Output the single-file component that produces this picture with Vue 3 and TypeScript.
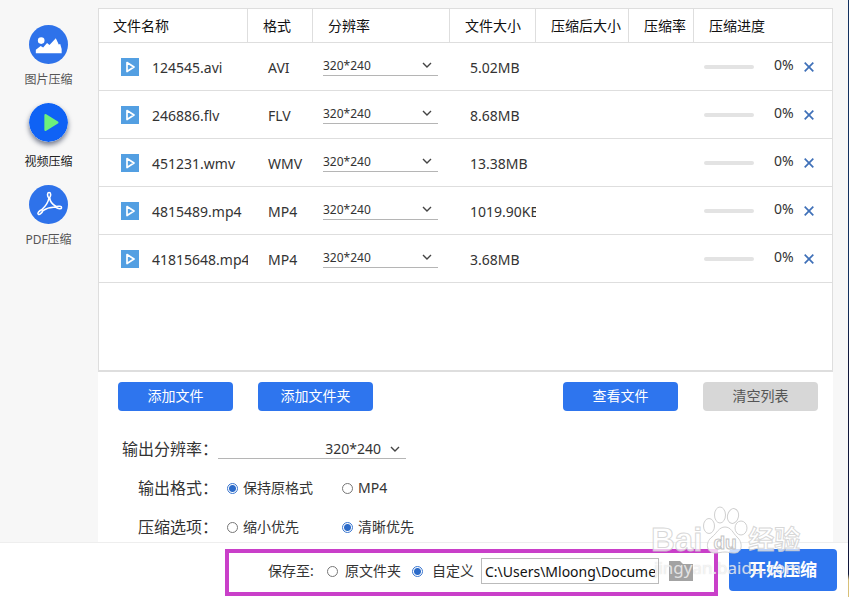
<script setup lang="ts">
import { ref } from 'vue'

interface VideoFile {
  name: string
  format: string
  resolution: string
  size: string
  progress: number
}

const resolutions: string[] = ['320*240', '640*480', '1280*720']

const files = ref<VideoFile[]>([
  { name: '124545.avi', format: 'AVI', resolution: '320*240', size: '5.02MB', progress: 0 },
  { name: '246886.flv', format: 'FLV', resolution: '320*240', size: '8.68MB', progress: 0 },
  { name: '451231.wmv', format: 'WMV', resolution: '320*240', size: '13.38MB', progress: 0 },
  { name: '4815489.mp4', format: 'MP4', resolution: '320*240', size: '1019.90KB', progress: 0 },
  { name: '41815648.mp4', format: 'MP4', resolution: '320*240', size: '3.68MB', progress: 0 },
])

const outputResolution = ref<string>('320*240')
const outputFormat = ref<string>('keep')
const priority = ref<string>('clear')
const saveTo = ref<string>('custom')
const savePath = ref<string>('C:\\Users\\Mloong\\Documents')

function removeFile(index: number): void {
  files.value.splice(index, 1)
}

function clearFiles(): void {
  files.value = []
}
</script>

<template>
  <div class="app">
    <div class="workspace">
      <nav class="sidebar">
        <a class="nav-item" href="#image">
          <svg class="nav-icon" viewBox="0 0 40 40" aria-hidden="true">
            <circle cx="20" cy="20" r="20" fill="#2e72ea" />
            <circle cx="12.5" cy="16" r="3.4" fill="#fff" />
            <path d="M7 29v-3.500l5-4 2.500 1.500 4-4.500 2.500 2 6.500-7 3 6.500 1.500-.5 1.500 5v4.500z" fill="#fff" />
          </svg>
          <span>图片压缩</span>
        </a>
        <a class="nav-item active" href="#video">
          <svg class="nav-icon" viewBox="0 0 40 40" aria-hidden="true">
            <circle cx="20" cy="20" r="20" fill="#0f62f5" />
            <path d="M17 12.500l12 7.500-12 7.500z" fill="#6df07c" stroke="#6df07c" stroke-width="2.500" stroke-linejoin="round" />
          </svg>
          <span>视频压缩</span>
        </a>
        <a class="nav-item" href="#pdf">
          <svg class="nav-icon" viewBox="0 0 40 40" aria-hidden="true">
            <circle cx="20" cy="20" r="20" fill="#2e72ea" />
            <g fill="none" stroke="#fff" stroke-width="1.6" stroke-linecap="round" stroke-linejoin="round">
              <path d="M20 13c-1.500-2.300-1.300-5.300.6-5.300s2.200 3 .6 5.300c.3 4 3.300 7.300 6.600 9 2.800-.6 5.900-.3 5.600 1.400-.4 1.600-3.400 1-5.900-.5-4.700-.5-9.700 1-13.200 3.400-1.200 2.500-3.500 4.700-4.800 3.600-1.200-1.200.8-3.300 3.500-4.500 3.700-3.200 6.800-8 7.600-12.400z" />
            </g>
          </svg>
          <span>PDF压缩</span>
        </a>
      </nav>

      <main class="content">
        <section class="file-list">
          <table>
            <colgroup>
              <col class="col-name" />
              <col class="col-format" />
              <col class="col-resolution" />
              <col class="col-size" />
              <col class="col-after" />
              <col class="col-ratio" />
              <col />
            </colgroup>
            <thead>
              <tr>
                <th>文件名称</th>
                <th>格式</th>
                <th>分辨率</th>
                <th>文件大小</th>
                <th>压缩后大小</th>
                <th>压缩率</th>
                <th>压缩进度</th>
              </tr>
            </thead>
            <tbody>
              <tr v-for="(file, index) in files" :key="file.name">
                <td>
                  <div class="name-cell">
                    <svg class="file-icon" viewBox="0 0 18 18" aria-hidden="true">
                      <rect width="18" height="18" fill="#539fe2" />
                      <path d="M6 4.500l7 4.500-7 4.500z" fill="none" stroke="#fff" stroke-width="1.700" stroke-linejoin="round" />
                    </svg>
                    <span class="file-name">{{ file.name }}</span>
                  </div>
                </td>
                <td class="value">{{ file.format }}</td>
                <td class="resolution-cell">
                  <div class="select-box row-select">
                    <select v-model="file.resolution" :aria-label="file.name + ' 分辨率'">
                      <option v-for="item in resolutions" :key="item">{{ item }}</option>
                    </select>
                    <svg class="chevron" viewBox="0 0 10 6" aria-hidden="true"><path d="M1 1l4 4 4-4" /></svg>
                  </div>
                </td>
                <td class="value">{{ file.size }}</td>
                <td></td>
                <td></td>
                <td>
                  <div class="progress-cell">
                    <div class="track"><div class="bar" :style="{ width: file.progress + '%' }"></div></div>
                    <span class="percent">{{ file.progress }}%</span>
                    <button type="button" class="remove" aria-label="删除" @click="removeFile(index)">
                      <svg viewBox="0 0 10 10" aria-hidden="true"><path d="M.7.7l8.600 8.600M9.300.7L.7 9.300" /></svg>
                    </button>
                  </div>
                </td>
              </tr>
            </tbody>
          </table>
        </section>

        <div class="actions">
          <button type="button" class="btn">添加文件</button>
          <button type="button" class="btn">添加文件夹</button>
          <button type="button" class="btn view">查看文件</button>
          <button type="button" class="btn muted" @click="clearFiles">清空列表</button>
        </div>

        <form class="settings" @submit.prevent>
          <div class="setting">
            <label class="setting-label" for="output-resolution">输出分辨率：</label>
            <div class="select-box output-select">
              <select id="output-resolution" v-model="outputResolution">
                <option v-for="item in resolutions" :key="item">{{ item }}</option>
              </select>
              <svg class="chevron" viewBox="0 0 10 6" aria-hidden="true"><path d="M1 1l4 4 4-4" /></svg>
            </div>
          </div>
          <div class="setting" role="radiogroup" aria-labelledby="format-label">
            <span id="format-label" class="setting-label">输出格式：</span>
            <label class="choice"><input v-model="outputFormat" type="radio" name="format" value="keep" />保持原格式</label>
            <label class="choice"><input v-model="outputFormat" type="radio" name="format" value="mp4" />MP4</label>
          </div>
          <div class="setting" role="radiogroup" aria-labelledby="priority-label">
            <span id="priority-label" class="setting-label">压缩选项：</span>
            <label class="choice"><input v-model="priority" type="radio" name="priority" value="small" />缩小优先</label>
            <label class="choice"><input v-model="priority" type="radio" name="priority" value="clear" />清晰优先</label>
          </div>
        </form>
      </main>
    </div>

    <footer class="footer">
      <div class="save-box" role="radiogroup" aria-labelledby="save-label">
        <span id="save-label" class="save-label">保存至:</span>
        <label class="save-choice"><input v-model="saveTo" type="radio" name="save" value="source" />原文件夹</label>
        <label class="save-choice custom"><input v-model="saveTo" type="radio" name="save" value="custom" />自定义</label>
        <input v-model="savePath" class="path" type="text" aria-label="保存路径" />
        <button type="button" class="browse" aria-label="浏览">
          <svg viewBox="0 0 24 20" aria-hidden="true"><path d="M0 0h11l3 3h10v17H0z" fill="#a3a3a3" /></svg>
        </button>
      </div>
      <button type="button" class="start">开始压缩</button>
    </footer>

    <div class="watermark">
      <div class="brand">
        <span class="brand-text">Bai</span>
        <svg class="paw" viewBox="0 0 46 50" aria-hidden="true">
          <ellipse cx="7" cy="21" rx="5.500" ry="7.500" />
          <ellipse cx="18" cy="10" rx="5.500" ry="8" />
          <ellipse cx="31" cy="11" rx="5.500" ry="7.500" transform="rotate(12 31 11)" />
          <ellipse cx="39" cy="23" rx="6" ry="7" />
          <path d="M23 22c6 0 8 6 12 10 6 5 6 16-3 16-4 0-5-1-9-1s-6 1-10 1c-9 0-10-11-3-16 5-4 7-10 13-10z" />
          <text x="23" y="44" text-anchor="middle">du</text>
        </svg>
        <span class="brand-cjk">经验</span>
      </div>
      <div class="site">jingyan.baidu.com</div>
    </div>
  </div>
</template>

<style>
body {
  margin: 0;
}
</style>

<style scoped>
* {
  box-sizing: border-box;
}

.app {
  position: relative;
  display: flex;
  flex-direction: column;
  min-height: 100vh;
  overflow: hidden;
  background: #fff;
  border-right: 1px solid #12305f;
  border-image: linear-gradient(#12305f 50%, #10163a 60%, #10163a 96%, #d8c078 97%) 1;
  color: #333;
  font: 14px/20px "Noto Sans", "Noto Sans CJK SC", sans-serif;
}

button,
select,
input {
  font: inherit;
  color: inherit;
}

button {
  padding: 0;
  border: 0;
  cursor: pointer;
}

.workspace {
  display: flex;
  flex: 1;
  padding-right: 15px;
  background: #f7f7f7;
}

.sidebar {
  display: flex;
  flex: 0 0 97px;
  flex-direction: column;
  align-items: center;
  gap: 14px;
  padding-top: 25px;
  margin-right: 1px;
}

.nav-item {
  display: flex;
  flex-direction: column;
  align-items: center;
  gap: 7px;
  color: #555;
  font-size: 12px;
  line-height: 18px;
  text-decoration: none;
}

.nav-icon {
  width: 39px;
  height: 39px;
}

.active {
  gap: 11px;
  color: #222;
}

.active .nav-icon {
  border-radius: 50%;
  box-shadow: 0 3px 5px rgba(30, 40, 70, 0.6);
}

.content {
  display: flex;
  flex: 1;
  flex-direction: column;
  min-width: 0;
  padding-top: 8px;
}

.file-list {
  height: 364px;
  overflow: hidden;
  background: #fff;
  border: 1px solid #dedede;
  border-bottom-width: 2px;
}

table {
  width: 100%;
  border-collapse: collapse;
  table-layout: fixed;
}

.col-name {
  width: 149px;
}

.col-format,
.col-ratio {
  width: 65px;
}

.col-resolution {
  width: 137px;
}

.col-size {
  width: 86px;
}

.col-after {
  width: 93px;
}

th {
  height: 34px;
  padding: 0 0 0 15px;
  box-shadow: inset -1px -1px #dedede;
  color: #111;
  font-weight: 400;
  text-align: left;
  white-space: nowrap;
}

th:first-child {
  padding-left: 14px;
}

th:last-child {
  box-shadow: inset 0 -1px #dedede;
}

td {
  height: 48px;
  padding: 0;
  overflow: hidden;
  box-shadow: inset 0 -1px #dedede;
  white-space: nowrap;
}

.value {
  padding: 2px 0 0 20px;
}

.name-cell {
  display: flex;
  align-items: center;
  gap: 13px;
  padding-left: 22px;
}

.file-name {
  padding-top: 2px;
}

.file-icon {
  flex: none;
  width: 18px;
  height: 18px;
}

.select-box {
  position: relative;
  border-bottom: 1px solid #b5b5b5;
}

.select-box select {
  display: block;
  width: 100%;
  padding: 0;
  border: 0;
  outline: 0;
  background: transparent;
  appearance: none;
}

.chevron {
  position: absolute;
  top: 50%;
  right: 6px;
  width: 10px;
  height: 6px;
  margin-top: -3px;
  pointer-events: none;
}

.chevron path {
  fill: none;
  stroke: #444;
  stroke-width: 1.4;
}

.resolution-cell {
  padding: 0 12px 4px 10px;
}

.row-select {
  font-size: 12px;
}

.row-select select {
  height: 20px;
  padding-top: 1px;
}

.progress-cell {
  display: flex;
  align-items: center;
  padding-left: 10px;
}

.track {
  width: 50px;
  height: 4px;
  overflow: hidden;
  border-radius: 2px;
  background: #e3e3e3;
}

.bar {
  height: 100%;
  background: #2e72ea;
}

.percent {
  width: 30px;
  padding-bottom: 4px;
  margin-left: 20px;
}

.remove {
  display: flex;
  background: transparent;
}

.remove svg {
  width: 10px;
  height: 10px;
}

.remove path {
  fill: none;
  stroke: #3f70b8;
  stroke-width: 1.7;
}

.actions {
  display: flex;
  gap: 25px;
  padding: 10px 15px 0 20px;
  background: #fff;
}

.btn {
  width: 115px;
  height: 29px;
  padding-bottom: 2px;
  border-radius: 4px;
  background: #2e75ee;
  color: #fff;
}

.view {
  margin-left: auto;
}

.muted {
  background: #d7d7d7;
  color: #555;
}

.settings {
  display: flex;
  flex: 1;
  flex-direction: column;
  gap: 13px;
  padding: 25px 0 0 20px;
  background: #fff;
}

.setting {
  display: flex;
  align-items: center;
  height: 26px;
}

.setting-label {
  width: 100px;
  font-size: 16px;
  line-height: 24px;
  text-align: right;
  white-space: nowrap;
}

.output-select {
  width: 188px;
}

.output-select select {
  height: 19px;
  padding-right: 25px;
  text-align-last: right;
}

.choice {
  display: flex;
  align-items: center;
  gap: 5px;
  width: 115px;
  padding-left: 9px;
  white-space: nowrap;
}

input[type='radio'] {
  flex: none;
  width: 11px;
  height: 11px;
  margin: 0;
  border: 1px solid #777;
  border-radius: 50%;
  background: #fff;
  appearance: none;
}

input[type='radio']:checked {
  border-color: #3a76cf;
  background: radial-gradient(circle, #2c6bc9 3px, #fff 4px);
}

.footer {
  display: flex;
  align-items: flex-start;
  justify-content: flex-end;
  gap: 11px;
  height: 55px;
  padding: 6px 11px 0 0;
  background: #fff;
  border-top: 1px solid #eee;
}

.save-box {
  display: flex;
  align-items: center;
  width: 493px;
  height: 47px;
  padding: 0 0 3px 39px;
  border: 4px solid #c93fc9;
  white-space: nowrap;
}

.save-label {
  width: 59px;
}

.save-choice {
  display: flex;
  align-items: center;
  gap: 7px;
  margin-right: 11px;
}

.custom {
  gap: 9px;
  margin-right: 7px;
}

.path {
  width: 178px;
  height: 26px;
  padding: 0 3px;
  border: 1px solid #bbb;
  outline: 0;
  background: #fff;
  color: #111;
}

.browse {
  display: flex;
  margin-left: 10px;
  background: transparent;
}

.browse svg {
  width: 24px;
  height: 20px;
}

.start {
  width: 108px;
  height: 42px;
  border-radius: 4px;
  background: #2e75ee;
  color: #fff;
  font-size: 17px;
  font-weight: 700;
}

.watermark {
  position: absolute;
  right: 45px;
  bottom: 16px;
  width: 152px;
  color: rgba(255, 255, 255, 0.7);
  pointer-events: none;
  white-space: nowrap;
}

.brand {
  display: flex;
  align-items: flex-end;
  height: 50px;
  line-height: 32px;
  font-weight: 700;
  -webkit-text-stroke: 1px rgba(205, 205, 205, 0.8);
}

.brand-text {
  font-family: "Liberation Sans", sans-serif;
  font-size: 33px;
  line-height: 30px;
}

.paw {
  flex: none;
  width: 46px;
  height: 50px;
}

.paw ellipse,
.paw path {
  fill: rgba(255, 255, 255, 0.75);
  stroke: #d0d0d0;
}

.paw text {
  fill: #fff;
  stroke: #c4c4c4;
  stroke-width: 1px;
  font: 700 19px "Liberation Sans", sans-serif;
}

.brand-cjk {
  font-size: 26px;
}

.site {
  padding-left: 3px;
  font-size: 17px;
  line-height: 26px;
  text-shadow: 0 0 1px rgba(170, 170, 170, 0.5);
}
</style>
